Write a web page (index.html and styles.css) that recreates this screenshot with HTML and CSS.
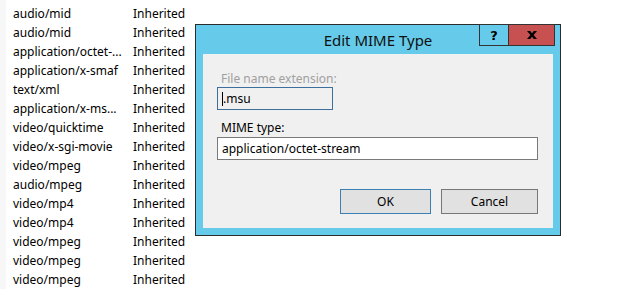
FILE: index.html
```html
<!DOCTYPE html>
<html lang="en">
<head>
    <meta charset="UTF-8">
    <title>Edit MIME Type</title>
    <link rel="stylesheet" href="styles.css">
</head>
<body>
    <div class="desktop">
        <div class="mime-list">
            <div class="row"><span class="ext">audio/mid</span><span class="entry">Inherited</span></div>
            <div class="row"><span class="ext">audio/mid</span><span class="entry">Inherited</span></div>
            <div class="row"><span class="ext">application/octet-...</span><span class="entry">Inherited</span></div>
            <div class="row"><span class="ext">application/x-smaf</span><span class="entry">Inherited</span></div>
            <div class="row"><span class="ext">text/xml</span><span class="entry">Inherited</span></div>
            <div class="row"><span class="ext">application/x-ms...</span><span class="entry">Inherited</span></div>
            <div class="row"><span class="ext">video/quicktime</span><span class="entry">Inherited</span></div>
            <div class="row"><span class="ext">video/x-sgi-movie</span><span class="entry">Inherited</span></div>
            <div class="row"><span class="ext">video/mpeg</span><span class="entry">Inherited</span></div>
            <div class="row"><span class="ext">audio/mpeg</span><span class="entry">Inherited</span></div>
            <div class="row"><span class="ext">video/mp4</span><span class="entry">Inherited</span></div>
            <div class="row"><span class="ext">video/mp4</span><span class="entry">Inherited</span></div>
            <div class="row"><span class="ext">video/mpeg</span><span class="entry">Inherited</span></div>
            <div class="row"><span class="ext">video/mpeg</span><span class="entry">Inherited</span></div>
            <div class="row"><span class="ext">video/mpeg</span><span class="entry">Inherited</span></div>
        </div>

        <div class="dialog">
            <div class="titlebar">
                <span class="title">Edit MIME Type</span>
                <div class="controls">
                    <button class="ctl help">?</button>
                    <button class="ctl close">
                        <svg width="10" height="8" viewBox="0 0 10 8">
                            <path d="M0 0h3.2l1.8 2.3 1.8-2.3H10L6.6 4 10 8H6.8L5 5.7 3.2 8H0l3.4-4z" fill="#000"/>
                        </svg>
                    </button>
                </div>
            </div>
            <div class="client">
                <label class="field-label disabled">File name extension:</label>
                <div class="textbox short focused"><span class="caret"></span>.msu</div>
                <label class="field-label">MIME type:</label>
                <div class="textbox wide">application/octet-stream</div>
                <div class="actions">
                    <button class="btn default">OK</button>
                    <button class="btn cancel">Cancel</button>
                </div>
            </div>
        </div>
    </div>
</body>
</html>
```

FILE: styles.css
```css
* { margin: 0; padding: 0; box-sizing: border-box; }
body {
    background: #fff;
    color: #000;
    font-family: "Segoe UI", "Noto Sans", sans-serif;
    font-size: 12px;
    width: 642px;
    height: 293px;
    overflow: hidden;
}
.desktop { display: flex; align-items: flex-start; height: 293px; }

.mime-list {
    width: 195px;
    padding-top: 4px;
    border-left: 6px solid #f7f7f7;
    padding-left: 7px;
}
.row { display: flex; height: 19px; line-height: 19px; white-space: nowrap; }
.ext { width: 120px; }

.dialog {
    margin-top: 24px;
    width: 366px;
    height: 212px;
    background: #66cbea;
    border: 1px solid #2b2b2b;
    padding: 0 7px 7px;
}
.titlebar {
    position: relative;
    height: 29px;
    display: flex;
    justify-content: center;
    align-items: center;
}
.title { font-size: 15px; color: #111; padding-top: 1px; }
.controls {
    position: absolute;
    top: -1px;
    right: -2px;
    display: flex;
}
.ctl {
    height: 22px;
    border: 1px solid #333;
    display: flex;
    align-items: center;
    justify-content: center;
    font-family: "DejaVu Sans", sans-serif;
}
.help {
    width: 29px;
    background: #66cbea;
    font-weight: bold;
    font-size: 13px;
    border-right: none;
}
.close { width: 47px; background: #c75050; }

.client {
    height: 174px;
    background: #f0f0f0;
    padding: 17px 15px 0 14px;
    display: flex;
    flex-direction: column;
}
.field-label { display: block; height: 16px; line-height: 16px; padding-left: 4px; }
.field-label.disabled { color: #a0a0a0; }
.textbox {
    height: 23px;
    line-height: 21px;
    padding-left: 4px;
    border: 1px solid #7a7a7a;
    background: #fff;
    white-space: nowrap;
}
.textbox.short { width: 116px; margin-bottom: 10px; }
.textbox.wide { width: 321px; margin-top: 1px; }
.textbox.focused { border-color: #3c6f9c; background: #f0f0f0; }
.caret {
    display: inline-block;
    width: 1px;
    height: 14px;
    background: #000;
    vertical-align: -3px;
}
.actions {
    display: flex;
    justify-content: flex-end;
    gap: 10px;
    margin-top: 29px;
}
.btn {
    height: 25px;
    background: #e1e1e1;
    border: 1px solid #777;
    font-family: inherit;
    font-size: 12px;
    color: #000;
}
.btn.default { width: 91px; border-color: #3c7fb1; }
.btn.cancel { width: 97px; }
```
